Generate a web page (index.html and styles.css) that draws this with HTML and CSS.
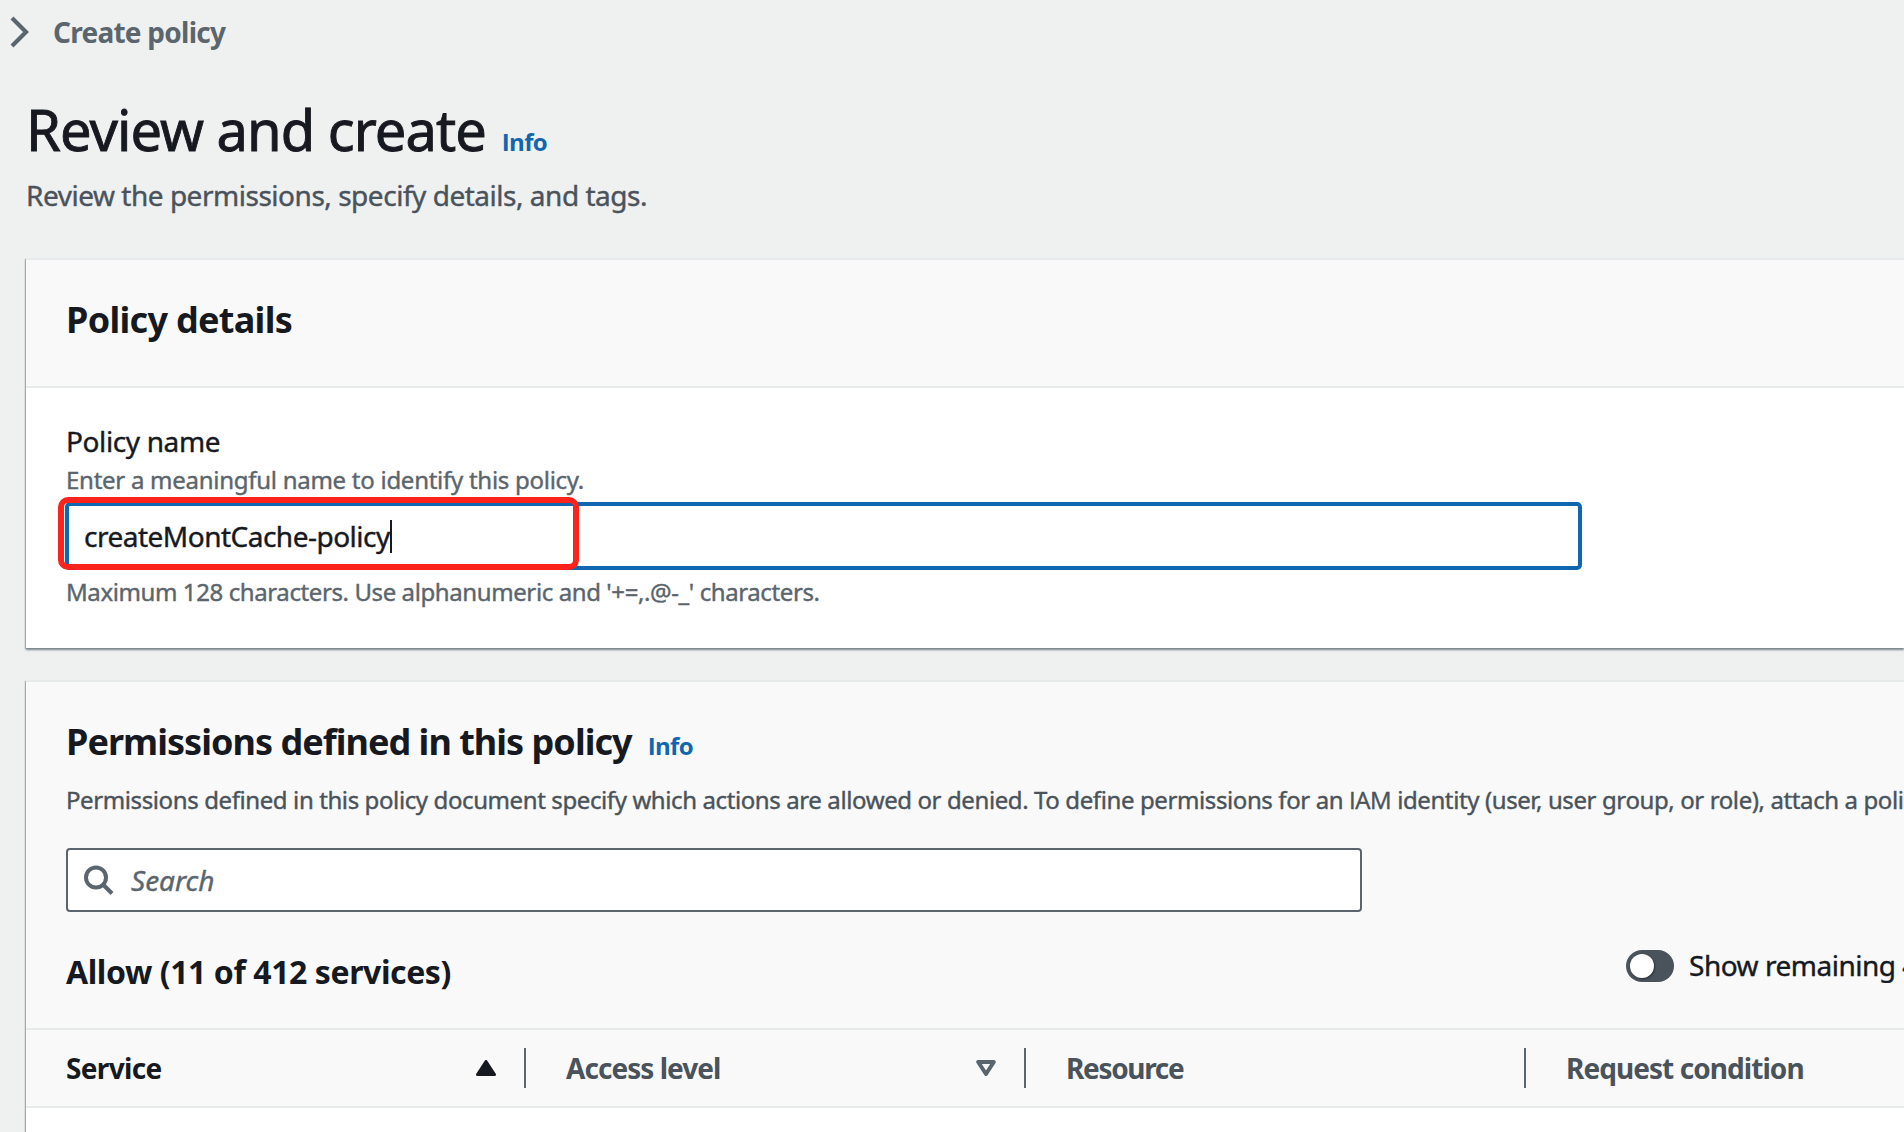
FILE: index.html
```html
<!DOCTYPE html>
<html lang="en">
<head>
<meta charset="utf-8">
<title>Create policy</title>
<link rel="stylesheet" href="styles.css">
</head>
<body>
<nav class="breadcrumb">
  <svg class="chevron" width="22" height="34" viewBox="0 0 22 34"><path d="M3 3l14 14L3 31" fill="none" stroke="currentColor" stroke-width="4.2"/></svg>
  <span class="crumb">Create policy</span>
</nav>
<main>
  <header class="page-header">
    <div class="title-row"><h1>Review and create</h1><a class="info info-page">Info</a></div>
    <p class="lead">Review the permissions, specify details, and tags.</p>
  </header>

  <section class="panel">
    <div class="panel-header"><h2 class="details-title">Policy details</h2></div>
    <div class="panel-body">
      <div class="label">Policy name</div>
      <div class="hint hint-top">Enter a meaningful name to identify this policy.</div>
      <div class="input"><span class="value">createMontCache-policy</span><span class="caret"></span><div class="highlight"></div></div>
      <div class="hint hint-bottom">Maximum 128 characters. Use alphanumeric and '+=,.@-_' characters.</div>
    </div>
  </section>

  <section class="panel permissions">
    <div class="permissions-header">
      <div class="title-row"><h2 class="permissions-title">Permissions defined in this policy</h2><a class="info info-panel">Info</a></div>
      <p class="description">Permissions defined in this policy document specify which actions are allowed or denied. To define permissions for an <span class="abbr">IAM</span> identity (user, user group, or role), attach a policy</p>
      <div class="search">
        <svg width="32" height="32" viewBox="0 0 32 32"><circle cx="13" cy="13.5" r="10" fill="none" stroke="currentColor" stroke-width="4"/><path d="M20 20.5l9 9" stroke="currentColor" stroke-width="4"/></svg>
        <span class="placeholder">Search</span>
      </div>
      <div class="toolbar">
        <h3>Allow (11 of 412 services)</h3>
        <div class="toggle-row"><span class="toggle"><span class="knob"></span></span><span class="toggle-label">Show remaining 4</span></div>
      </div>
    </div>
    <div class="table-head">
      <div class="cell sorted"><span class="col-service">Service</span><svg width="20" height="16" viewBox="0 0 20 16"><path d="M10 1.5L18.5 14.5H1.5Z" fill="currentColor" stroke="currentColor" stroke-width="3" stroke-linejoin="round"/></svg></div>
      <div class="cell"><span class="col-access">Access level</span><svg class="sort-icon" width="20" height="16" viewBox="0 0 20 16"><path d="M2.2 2H17.8L10 14Z" fill="none" stroke="currentColor" stroke-width="4" stroke-linejoin="round"/></svg></div>
      <div class="cell"><span class="col-resource">Resource</span></div>
      <div class="cell last"><span class="col-condition">Request condition</span></div>
    </div>
    <div class="table-body"></div>
  </section>
</main>
</body>
</html>
```
FILE: styles.css
```css
* { box-sizing: border-box; }
body {
  margin: 0;
  height: 1132px;
  overflow: hidden;
  background: #eff1f1;
  color: #16191f;
  font: 28px/36px "Noto Sans", "Open Sans", sans-serif;
  white-space: nowrap;
}
h1, h2, h3, p { margin: 0; }
h1, .lead, .label, .hint, .value, .description, .placeholder, .toggle-label {
  -webkit-text-stroke: 0.4px currentColor;
}

.breadcrumb {
  display: flex;
  align-items: center;
  gap: 22px;
  height: 64px;
  padding-left: 9px;
  padding-bottom: 1px;
  color: #5b656d;
}
.chevron { display: block; }
.crumb { font-weight: 700; letter-spacing: -0.744px; }

main { padding-left: 26px; overflow: hidden; }
.page-header { padding-top: 30px; height: 194px; }
.title-row { display: flex; align-items: baseline; }
h1 {
  font-size: 56px;
  line-height: 70px;
  font-weight: 400;
  letter-spacing: -0.95px;
  -webkit-text-stroke-width: 0.9px;
}
.info {
  color: #1166b0;
  font: 700 24px/32px "Open Sans", sans-serif;
  letter-spacing: -0.67px;
}
.info-page { margin-left: 16px; }
.info-panel { margin-left: 16px; }
.lead { margin-top: 13px; color: #4a535b; letter-spacing: -0.475px; }

.panel {
  height: 390px;
  border-top: 2px solid #e6eaea;
  background: #fff;
  box-shadow: 0 2px 2px #7b868b, -1px 1px 1px #b4bbbd;
}
.panel-header {
  padding: 38px 40px 44px;
  background: #f9f9f9;
  border-bottom: 2px solid #e6ebea;
}
h2 { font-size: 36px; line-height: 44px; font-weight: 700; }
.details-title { letter-spacing: -0.7px; }
.panel-body { padding: 35px 40px 40px; }
.label { letter-spacing: -0.38px; }
.hint { font-size: 24px; line-height: 32px; color: #5b656d; }
.hint-top { margin-top: 5px; letter-spacing: -0.27px; }
.hint-bottom { margin-top: 6px; letter-spacing: -0.4px; }
.input {
  position: relative;
  display: flex;
  align-items: center;
  width: 1517px;
  height: 68px;
  margin: 6px 0 0 -1px;
  padding-left: 15px;
  border: 4px solid #1166b0;
  border-radius: 5px;
}
.value { letter-spacing: -0.505px; }
.caret { width: 2px; height: 33px; margin-left: 0; background: #16191f; }
.highlight {
  position: absolute;
  left: -11px;
  top: -9px;
  width: 521px;
  height: 73px;
  border: 6px solid #fb231c;
  border-radius: 10px;
}

.permissions { margin-top: 32px; height: 460px; }
.permissions-header { height: 346px; padding: 38px 40px 0; background: #f9f9f9; }
.permissions-title { letter-spacing: -0.97px; }
.description {
  margin-top: 20px;
  margin-right: -40px;
  overflow: hidden;
  font-size: 24px;
  line-height: 32px;
  color: #4a535b;
  letter-spacing: -0.395px;
}
.abbr { font-family: "Open Sans", sans-serif; }
.search {
  display: flex;
  align-items: center;
  gap: 16px;
  width: 1296px;
  height: 64px;
  margin-top: 32px;
  padding-left: 15px;
  border: 2px solid #5b656d;
  border-radius: 4px;
  background: #fff;
  color: #5b656d;
}
.placeholder { font-style: italic; letter-spacing: 0; }
.toolbar { display: flex; justify-content: space-between; align-items: flex-start; margin-right: -40px; }
h3 {
  margin-top: 40px;
  font-size: 32px;
  line-height: 40px;
  letter-spacing: -0.42px;
}
.toggle-row {
  display: flex;
  align-items: center;
  gap: 15px;
  width: 278px;
  margin-top: 35px;
  overflow: hidden;
}
.toggle {
  display: flex;
  flex: none;
  width: 48px;
  height: 32px;
  margin-top: 2px;
  padding: 4px;
  border-radius: 16px;
  background: #4a535b;
}
.knob { width: 24px; height: 24px; border-radius: 50%; background: #fff; box-shadow: 1px 1px 2px #2b3238; }
.toggle-label { letter-spacing: -0.483px; }

.table-head {
  display: grid;
  grid-template-columns: repeat(3, 500px) 1fr;
  height: 80px;
  padding: 18px 0;
  border-top: 2px solid #e6ebea;
  border-bottom: 2px solid #e6ebea;
  background: #f9f9f9;
}
.cell {
  display: flex;
  justify-content: space-between;
  align-items: center;
  height: 40px;
  padding: 0 28px 1px 40px;
  border-right: 2px solid #5b656d;
  color: #4a535b;
  font-weight: 700;
}
.cell.last { border-right: 0; }
.cell svg { margin-top: 1px; }
.sorted { color: #16191f; }
.sort-icon { color: #5b656d; }
.col-service { letter-spacing: -0.661px; }
.col-access { letter-spacing: -0.962px; }
.col-resource { letter-spacing: -1.321px; }
.col-condition { letter-spacing: -0.94px; }
```
